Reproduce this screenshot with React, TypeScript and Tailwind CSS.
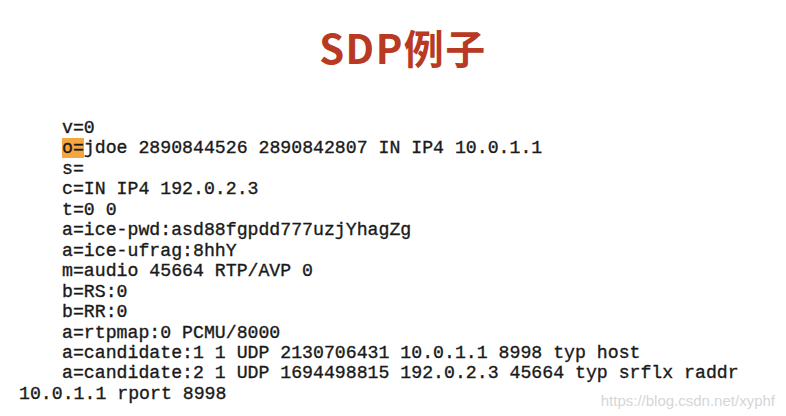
const lines: string[] = [
  'v=0',
  '__o__jdoe 2890844526 2890842807 IN IP4 10.0.1.1',
  's=',
  'c=IN IP4 192.0.2.3',
  't=0 0',
  'a=ice-pwd:asd88fgpdd777uzjYhagZg',
  'a=ice-ufrag:8hhY',
  'm=audio 45664 RTP/AVP 0',
  'b=RS:0',
  'b=RR:0',
  'a=rtpmap:0 PCMU/8000',
  'a=candidate:1 1 UDP 2130706431 10.0.1.1 8998 typ host',
  'a=candidate:2 1 UDP 1694498815 192.0.2.3 45664 typ srflx raddr',
]

export default function App() {
  return (
    <div className="relative h-[416px] w-[786px] overflow-hidden bg-white">
      <h1
        className="pl-[20px] pt-[22px] text-center text-[40px] font-bold leading-[50px] tracking-[1.5px] text-[#b83a22]"
        style={{ fontFamily: '"Noto Sans CJK SC", "Noto Sans", sans-serif' }}
      >
        SDP例子
      </h1>

      <div
        className="mt-[46px] text-[18.2px] leading-[20.45px] text-[#1a1a1a] [-webkit-text-stroke:0.35px_#1a1a1a]"
        style={{ fontFamily: '"Liberation Mono", "Courier New", monospace' }}
      >
        {lines.map((line, i) => (
          <div key={i} className="whitespace-pre pl-[62px]">
            {line.startsWith('__o__') ? (
              <>
                <span className="bg-[#f4a640]">o=</span>
                {line.slice(5)}
              </>
            ) : (
              line
            )}
          </div>
        ))}
        <div className="whitespace-pre pl-[19px]">10.0.1.1 rport 8998</div>
      </div>

      <div
        className="absolute bottom-[4px] right-[11px] text-[15px] text-[#d6d6d6]"
        style={{ fontFamily: '"Liberation Sans", Arial, sans-serif' }}
      >
        https://blog.csdn.net/xyphf
      </div>
    </div>
  )
}
